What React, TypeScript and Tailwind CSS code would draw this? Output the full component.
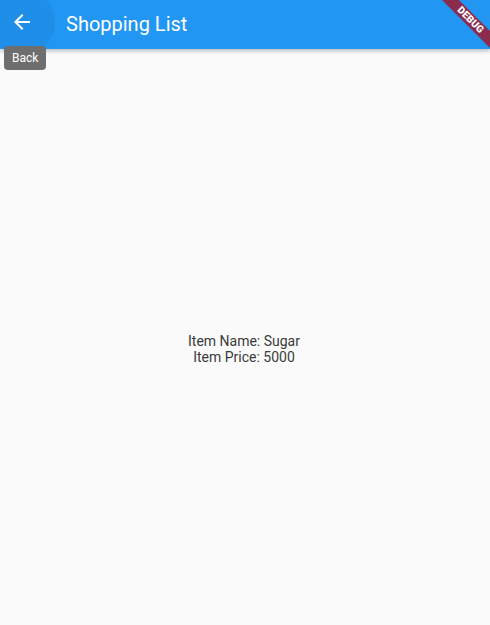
import React from "react";

export default function App() {
  return (
    <div className="relative w-[490px] h-[625px] overflow-hidden bg-[#fafafa] flex flex-col" style={{ fontFamily: "Roboto, 'Noto Sans', sans-serif" }}>
      <header className="relative z-10 h-[49px] bg-[#2196f3] flex items-center shadow-[0_2px_4px_rgba(0,0,0,0.25)] overflow-hidden shrink-0">
        <div className="absolute left-[-11px] top-[-11px] w-[66px] h-[66px] rounded-full bg-[#1e8ee8]" />
        <button className="relative w-[44px] h-[44px] flex items-center justify-center self-start">
          <svg width="24" height="24" viewBox="0 0 24 24" className="text-white" fill="currentColor">
            <path d="M20 11H7.83l5.59-5.59L12 4l-8 8 8 8 1.41-1.41L7.83 13H20v-2z" />
          </svg>
        </button>
        <h1 className="relative ml-[22px] text-[20px] text-white font-normal leading-none mb-[1px]">Shopping List</h1>
      </header>
      <div className="absolute z-20 left-[4px] top-[46px] h-[24px] px-[8px] rounded-[4px] bg-[#6e6e6e] text-white text-[12px] flex items-center">Back</div>
      <div className="absolute z-20 left-[420px] top-[13.5px] w-[101px] h-[12px] rotate-45 bg-[#8b2c4f] flex items-center justify-center text-white text-[10px] font-black leading-none tracking-[0.2px]">DEBUG</div>
      <main className="flex-1 flex flex-col items-center pt-[284px] text-[14px] text-[#3a3a3a] leading-[16px]">
        <div className="-ml-[2px]">Item Name: Sugar</div>
        <div className="-ml-[2px]">Item Price: 5000</div>
      </main>
    </div>
  );
}
